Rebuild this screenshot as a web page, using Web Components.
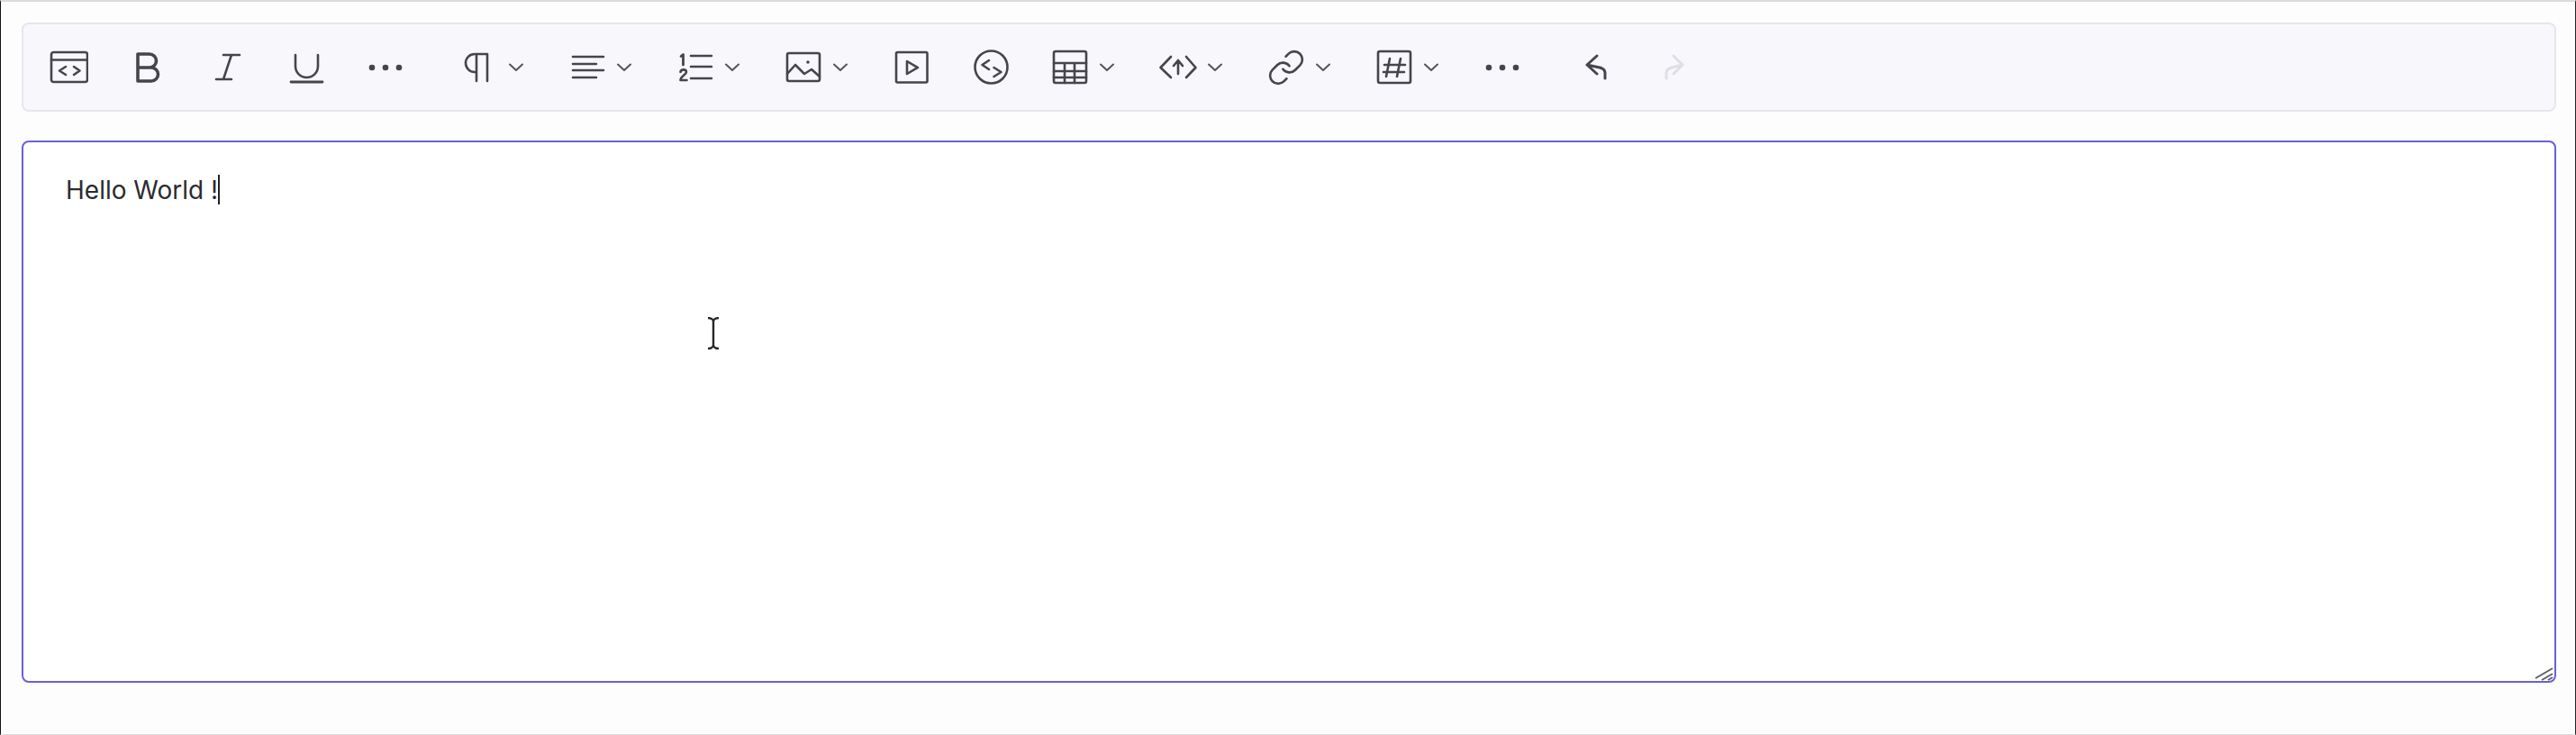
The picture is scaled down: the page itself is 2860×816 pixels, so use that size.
<!DOCTYPE html>
<html>
<head>
<meta charset="utf-8">
<style>
  html, body { margin: 0; padding: 0; height: 100%; }
  body { background: #fdfdfe; overflow: hidden; }
</style>
</head>
<body>
<editor-demo>
  <rich-toolbar>
    <tool-group>
      <tool-button icon="source"></tool-button>
      <tool-button icon="bold"></tool-button>
      <tool-button icon="italic"></tool-button>
      <tool-button icon="underline"></tool-button>
      <tool-button icon="dots"></tool-button>
    </tool-group>
    <tool-group>
      <tool-button icon="paragraph" dropdown></tool-button>
      <tool-button icon="align" dropdown></tool-button>
      <tool-button icon="list" dropdown></tool-button>
      <tool-button icon="image" dropdown></tool-button>
      <tool-button icon="video"></tool-button>
      <tool-button icon="embed"></tool-button>
      <tool-button icon="table" dropdown></tool-button>
      <tool-button icon="code" dropdown></tool-button>
      <tool-button icon="link" dropdown></tool-button>
      <tool-button icon="hash" dropdown></tool-button>
      <tool-button icon="dots"></tool-button>
    </tool-group>
    <tool-group>
      <tool-button icon="undo"></tool-button>
      <tool-button icon="redo" disabled></tool-button>
    </tool-group>
  </rich-toolbar>
  <edit-area>Hello World !</edit-area>
</editor-demo>

<script>
// Icons are drawn 1:1 on a 44x44 box, stroke comes from the <svg> attributes
const ICONS = {
  source: '<rect x="3" y="5" width="40" height="33" rx="2.5"/><path d="M3 13.500H43"/><path d="M19 21l-7 4.500 7 4.500M28 21l6.500 4.500-6.500 4.500"/>',
  bold: '<path d="M11 7H24a7.500 7.500 0 0 1 0 15H11zM11 22H26a7.500 7.500 0 0 1 0 15H11z" stroke-width="3.600"/>',
  italic: '<path d="M18 8H36M10 35H27M27 8L18 35"/>',
  underline: '<path d="M10 8V20.500a12.500 12.500 0 0 0 25 0V8"/><path d="M5 38H40" stroke-width="2.800"/>',
  dots: '<g fill="currentColor" stroke="none"><circle cx="7" cy="22" r="3.300"/><circle cx="22" cy="22" r="3.300"/><circle cx="37" cy="22" r="3.300"/></g>',
  paragraph: '<path d="M19 37V7M31 37V7M31 7H17a10 10 0 0 0 0 20h2"/>',
  align: '<path d="M6 10H40M6 18H32M6 25H40M6 33H32"/>',
  list: '<path d="M17 9H40M17 21H40M17 34H40"/><path d="M6 9.500l2.500-2V19" stroke-width="2.800"/><path d="M5.500 27c.5-3.500 6.500-3.500 6.500 0 0 3-6.500 4.500-6.500 9H12.500" stroke-width="2.600"/>',
  image: '<rect x="4" y="6" width="36" height="31" rx="2"/><path d="M4 29l9-10 10 10 8-5 9 8"/><circle cx="27" cy="16" r="1.800" fill="currentColor" stroke="none"/>',
  video: '<rect x="5" y="5" width="34.500" height="33.500" rx="1.500"/><path d="M17 15l12 7-12 7z"/>',
  embed: '<circle cx="22.500" cy="21.500" r="18"/><path d="M20 14l-7.500 5 7.500 5M25.500 22l8 5-8 5"/>',
  table: '<rect x="4" y="4" width="36" height="35" rx="2"/><path d="M4 17H40M4 26H40M4 33H40M16 17V39M27 17V39"/>',
  code: '<path d="M14 10L2.500 22 14 33M31 10L41.500 22 31 33M22 29V14M17 20l5-6 5 6"/>',
  link: '<g transform="translate(.4 .4) scale(1.800)" stroke-width="1.450"><path d="M10 13a5 5 0 0 0 7.540.54l3-3a5 5 0 0 0-7.070-7.070l-1.720 1.710"/><path d="M14 11a5 5 0 0 0-7.540-.54l-3 3a5 5 0 0 0 7.070 7.070l1.710-1.710"/></g>',
  hash: '<rect x="4" y="4" width="36" height="35" rx="2"/><path d="M17 12l-4 20M29 12l-4 20M11 19H34M10 27H33"/>',
  undo: '<path d="M23 9L12 19 23 29M12 19l14 3c4 1 6 3 6 6v6" stroke-width="3"/>',
  redo: '<path d="M20 9L30 19 20 29M30 19l-12 3c-4 1-6 3-6 6v6" stroke-width="3"/>'
};

class ToolButton extends HTMLElement {
  connectedCallback() {
    const hasDropdown = this.hasAttribute('dropdown');
    const icon = ICONS[this.getAttribute('icon')] || '';
    this.attachShadow({ mode: 'open' }).innerHTML = `
      <style>
        :host {
          display: flex;
          align-items: center;
          box-sizing: border-box;
          width: ${hasDropdown ? 120 : 88}px;
          height: 44px;
          padding-left: 22px;
          color: #45454b;
        }
        :host([disabled]) { color: #dedfe6; }
        svg { display: block; flex: none; }
        .caret { margin-left: 11px; color: #55555c; }
      </style>
      <svg width="44" height="44" viewBox="0 0 44 44" fill="none" stroke="currentColor" stroke-width="2.600" stroke-linecap="round" stroke-linejoin="round">${icon}</svg>
      ${hasDropdown ? '<svg class="caret" width="16" height="10" viewBox="0 0 16 10" fill="none" stroke="currentColor" stroke-width="2" stroke-linecap="round" stroke-linejoin="round"><path d="M1 1.500l7 6.500 7-6.500"/></svg>' : ''}
    `;
  }
}
customElements.define('tool-button', ToolButton);

class ToolGroup extends HTMLElement {
  constructor() {
    super();
    this.attachShadow({ mode: 'open' }).innerHTML = `
      <style>:host { display: flex; align-items: center; }</style>
      <slot></slot>
    `;
  }
}
customElements.define('tool-group', ToolGroup);

class RichToolbar extends HTMLElement {
  constructor() {
    super();
    this.attachShadow({ mode: 'open' }).innerHTML = `
      <style>
        :host {
          display: flex;
          align-items: center;
          gap: 16px;
          box-sizing: border-box;
          height: 99px;
          padding: 1px 6px 0;
          background: #f7f7fc;
          border: 2px solid #e6e6ec;
          border-radius: 8px;
        }
      </style>
      <slot></slot>
    `;
  }
}
customElements.define('rich-toolbar', RichToolbar);

class EditArea extends HTMLElement {
  constructor() {
    super();
    this.attachShadow({ mode: 'open' }).innerHTML = `
      <style>
        :host {
          display: block;
          position: relative;
          box-sizing: border-box;
          height: 602px;
          padding: 31px 47px;
          background: #fff;
          border: 2px solid #6a5fdc;
          border-radius: 8px;
          font: 28px/44px Inter, "Liberation Sans", sans-serif;
          color: #2b2b30;
        }
        .caret {
          display: inline-block;
          width: 2px;
          height: 33px;
          vertical-align: -6px;
          background: #222;
        }
        .grip { position: absolute; right: 0; bottom: 0; display: block; }
        .pointer { position: absolute; left: 759px; top: 194px; display: block; }
      </style>
      <slot></slot><span class="caret"></span>
      <svg class="grip" width="22" height="16" viewBox="0 0 22 16" fill="none" stroke="#5e5e63" stroke-width="2"><path d="M1 13L20 2M8 15l12-7M15 15l5-3"/></svg>
      <svg class="pointer" width="14" height="36" viewBox="0 0 14 36" fill="none" stroke="#26262a" stroke-width="2.400"><path d="M1 1c3 0 6 1.500 6 4v26c0 2.500-3 4-6 4M13 1c-3 0-6 1.500-6 4M13 35c-3 0-6-1.500-6-4"/></svg>
    `;
  }
}
customElements.define('edit-area', EditArea);

class EditorDemo extends HTMLElement {
  constructor() {
    super();
    this.attachShadow({ mode: 'open' }).innerHTML = `
      <style>
        :host {
          display: flex;
          flex-direction: column;
          gap: 32px;
          box-sizing: border-box;
          width: 2860px;
          height: 816px;
          padding: 23px 21px 0 23px;
          border-top: 2px solid #dcdcdc;
          border-bottom: 1px solid #dcdcdc;
          border-left: 1px solid #111;
          border-right: 1px solid #222;
        }
      </style>
      <slot></slot>
    `;
  }
}
customElements.define('editor-demo', EditorDemo);
</script>
</body>
</html>
